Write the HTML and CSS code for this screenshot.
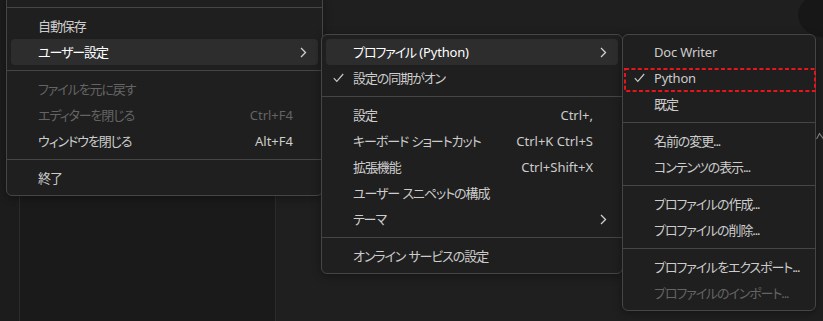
FILE: index.html
```html
<!DOCTYPE html>
<html lang="ja">
<head>
<meta charset="utf-8">
<title>Menu</title>
<link rel="stylesheet" href="styles.css">
</head>
<body>
<div class="workbench">
  <div class="gutter"></div>
  <div class="sidebar"></div>
  <div class="editor"></div>
</div>
<div class="blob"></div>
<svg class="edge-glyph" width="8" height="8" viewBox="0 0 8 8"><polyline points="0.5,7 3.5,1.5 7.5,7" fill="none" stroke="#8a8a8a" stroke-width="1.2"/></svg>

<div class="menu menu-main">
  <div class="sep"></div>
  <div class="item"><span class="check"></span><span class="label">自動保存</span><span class="key"></span><span class="sub"></span></div>
  <div class="item active"><span class="check"></span><span class="label">ユーザー設定</span><span class="key"></span><span class="sub"><svg width="7" height="11" viewBox="0 0 7 11"><polyline points="1,1 5.5,5.5 1,10" fill="none" stroke="currentColor" stroke-width="1.3"/></svg></span></div>
  <div class="sep"></div>
  <div class="item disabled"><span class="check"></span><span class="label">ファイルを元に戻す</span><span class="key"></span><span class="sub"></span></div>
  <div class="item disabled"><span class="check"></span><span class="label">エディターを閉じる</span><span class="key">Ctrl+F4</span><span class="sub"></span></div>
  <div class="item"><span class="check"></span><span class="label">ウィンドウを閉じる</span><span class="key">Alt+F4</span><span class="sub"></span></div>
  <div class="sep"></div>
  <div class="item"><span class="check"></span><span class="label">終了</span><span class="key"></span><span class="sub"></span></div>
</div>

<div class="menu menu-user">
  <div class="item active"><span class="check"></span><span class="label">プロファイル <span class="en">(Python)</span></span><span class="key"></span><span class="sub"><svg width="7" height="11" viewBox="0 0 7 11"><polyline points="1,1 5.5,5.5 1,10" fill="none" stroke="currentColor" stroke-width="1.3"/></svg></span></div>
  <div class="item"><span class="check"><svg width="11" height="10" viewBox="0 0 11 10"><polyline points="0.8,5.2 3.8,8.4 10.2,1" fill="none" stroke="currentColor" stroke-width="1.2"/></svg></span><span class="label">設定の同期がオン</span><span class="key"></span><span class="sub"></span></div>
  <div class="sep"></div>
  <div class="item"><span class="check"></span><span class="label">設定</span><span class="key">Ctrl+,</span><span class="sub"></span></div>
  <div class="item"><span class="check"></span><span class="label">キーボード ショートカット</span><span class="key">Ctrl+K Ctrl+S</span><span class="sub"></span></div>
  <div class="item"><span class="check"></span><span class="label">拡張機能</span><span class="key">Ctrl+Shift+X</span><span class="sub"></span></div>
  <div class="item"><span class="check"></span><span class="label">ユーザー スニペットの構成</span><span class="key"></span><span class="sub"></span></div>
  <div class="item"><span class="check"></span><span class="label">テーマ</span><span class="key"></span><span class="sub"><svg width="7" height="11" viewBox="0 0 7 11"><polyline points="1,1 5.5,5.5 1,10" fill="none" stroke="currentColor" stroke-width="1.3"/></svg></span></div>
  <div class="sep"></div>
  <div class="item"><span class="check"></span><span class="label">オンライン サービスの設定</span><span class="key"></span><span class="sub"></span></div>
</div>

<div class="menu menu-profile">
  <div class="item"><span class="check"></span><span class="label en">Doc Writer</span><span class="key"></span><span class="sub"></span></div>
  <div class="item"><span class="check"><svg width="11" height="10" viewBox="0 0 11 10"><polyline points="0.8,5.2 3.8,8.4 10.2,1" fill="none" stroke="currentColor" stroke-width="1.2"/></svg></span><span class="label en">Python</span><span class="key"></span><span class="sub"></span></div>
  <div class="item"><span class="check"></span><span class="label">既定</span><span class="key"></span><span class="sub"></span></div>
  <div class="sep"></div>
  <div class="item"><span class="check"></span><span class="label">名前の変更...</span><span class="key"></span><span class="sub"></span></div>
  <div class="item"><span class="check"></span><span class="label">コンテンツの表示...</span><span class="key"></span><span class="sub"></span></div>
  <div class="sep"></div>
  <div class="item"><span class="check"></span><span class="label">プロファイルの作成...</span><span class="key"></span><span class="sub"></span></div>
  <div class="item"><span class="check"></span><span class="label">プロファイルの削除...</span><span class="key"></span><span class="sub"></span></div>
  <div class="sep"></div>
  <div class="item"><span class="check"></span><span class="label">プロファイルをエクスポート...</span><span class="key"></span><span class="sub"></span></div>
  <div class="item disabled"><span class="check"></span><span class="label">プロファイルのインポート...</span><span class="key"></span><span class="sub"></span></div>
</div>

<svg class="annot" width="823" height="321" viewBox="0 0 823 321"><rect x="625" y="69" width="190" height="22" fill="none" stroke="#e8141a" stroke-width="2" stroke-dasharray="4 2.4"/></svg>
</body>
</html>
```

FILE: styles.css
```css
html, body {
  margin: 0;
  padding: 0;
  width: 823px;
  height: 321px;
  overflow: hidden;
  background: #1f1f1f;
  font-family: "Noto Sans", "Noto Sans CJK JP", sans-serif;
  font-size: 13px;
  color: #cccccc;
}

.workbench {
  display: flex;
  height: 321px;
}

.gutter {
  width: 19px;
  background: #1c1c1c;
}

.sidebar {
  width: 255px;
  background: #1a1a1a;
  border-left: 1px solid #2b2b2b;
  border-right: 1px solid #2b2b2b;
}

.editor {
  flex: 1;
  background: #1f1f1f;
}

.blob {
  position: absolute;
  left: 798px;
  top: -8px;
  width: 60px;
  height: 46px;
  border-radius: 50%;
  background: #171717;
}

.edge-glyph {
  position: absolute;
  left: 816px;
  top: 132px;
}

.menu {
  position: absolute;
  box-sizing: border-box;
  background: #1f1f1f;
  border: 1px solid #454545;
  border-radius: 6px;
  padding: 4px;
  box-shadow: 0 2px 8px rgba(0, 0, 0, 0.35);
}

.menu-main {
  left: 6px;
  top: -3px;
  width: 317px;
  border-top-left-radius: 0;
  border-top-right-radius: 0;
}

.menu-user {
  left: 321px;
  top: 34px;
  width: 302px;
}

.menu-profile {
  left: 622px;
  top: 34px;
  width: 194px;
}

.item {
  display: grid;
  grid-template-columns: 27px 1fr auto 25px;
  align-items: center;
  height: 26px;
  border-radius: 4px;
  white-space: nowrap;
  font-feature-settings: "palt";
}

.item.active {
  background: #2d2d2d;
  color: #ffffff;
}

.item.disabled {
  color: #646464;
}

.check {
  display: flex;
  align-items: center;
  padding-left: 7px;
  color: #c8c8c8;
}

.label {
  line-height: 26px;
  letter-spacing: -1.1px;
  word-spacing: 1px;
}

.label .en,
.label.en {
  letter-spacing: -0.2px;
  word-spacing: 0;
}

.key {
  text-align: right;
  line-height: 26px;
}

.sub {
  display: flex;
  align-items: center;
  padding-left: 7px;
  color: #d0d0d0;
}

.sep {
  height: 1px;
  margin: 5px -4px;
  background: #454545;
}

.annot {
  position: absolute;
  left: 0;
  top: 0;
  pointer-events: none;
}
```
